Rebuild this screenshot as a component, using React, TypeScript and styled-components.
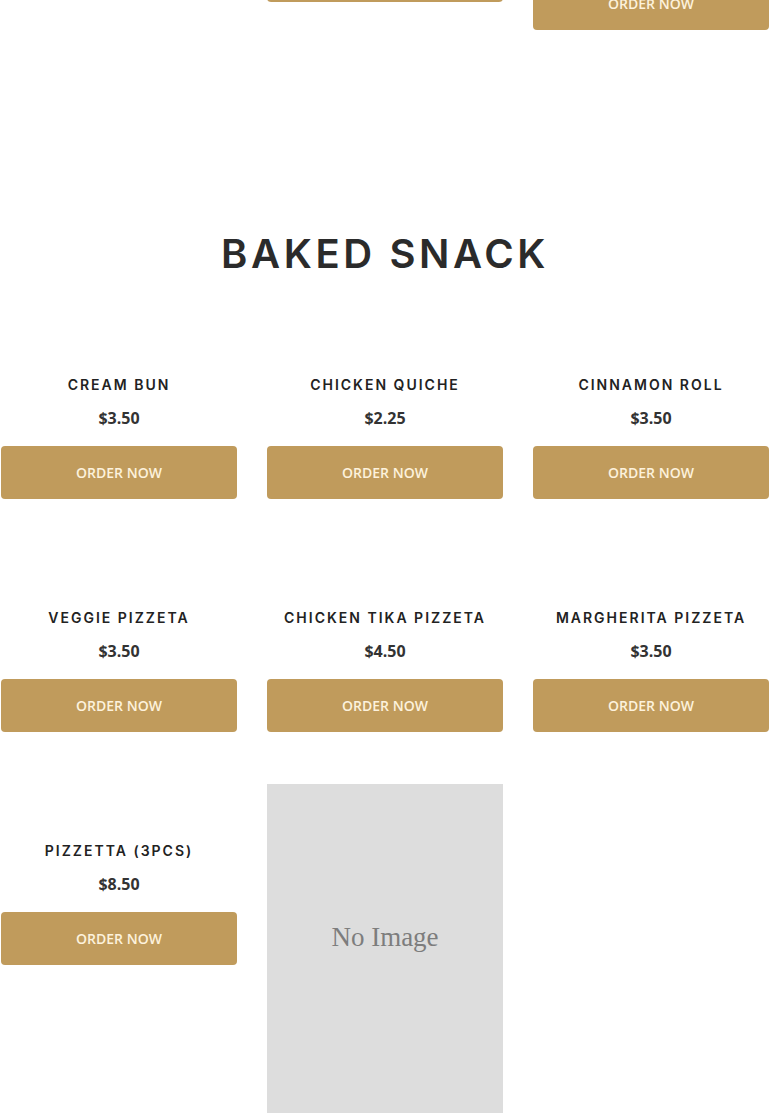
import React from "react";
import styled, { createGlobalStyle } from "styled-components";

const Global = createGlobalStyle`
  html, body { margin: 0; padding: 0; background: #fff; }
  body { font-family: "Open Sans", "Liberation Sans", sans-serif; overflow: hidden; }
`;

const Page = styled.div`
  width: 770px;
  height: 1119px;
  overflow: hidden;
  box-sizing: border-box;
  padding: 0 1px;
`;

const Grid = styled.div<{ $top?: number }>`
  display: grid;
  grid-template-columns: repeat(3, 236px);
  column-gap: 30px;
  row-gap: 49px;
  align-items: start;
  margin-top: ${(p) => p.$top ?? 0}px;
`;

const Heading = styled.h2`
  margin: 200px 0 0;
  height: 48px;
  line-height: 48px;
  text-align: center;
  font-family: Inter, "Noto Sans", sans-serif;
  font-weight: 600;
  font-size: 40px;
  letter-spacing: 3.6px;
  color: #2b2b2b;
`;

const Card = styled.div<{ $pad?: number }>`
  display: flex;
  flex-direction: column;
  align-items: center;
  padding-top: ${(p) => p.$pad ?? 60}px;
`;

const Title = styled.div`
  height: 20px;
  line-height: 20px;
  font-family: Inter, "Noto Sans", sans-serif;
  font-weight: 600;
  font-size: 14px;
  letter-spacing: 2px;
  color: #222;
  text-transform: uppercase;
  white-space: nowrap;
`;

const Price = styled.div`
  margin-top: 11px;
  height: 24px;
  line-height: 24px;
  font-family: "Open Sans", sans-serif;
  font-weight: 700;
  font-size: 16px;
  color: #333;
`;

const Button = styled.button<{ $gap?: number }>`
  margin-top: ${(p) => p.$gap ?? 16}px;
  width: 236px;
  height: 53px;
  border: none;
  border-radius: 4px;
  background: #c09b5c;
  color: #fdf2dc;
  font-family: "Open Sans", sans-serif;
  font-size: 14px;
  font-weight: 600;
  text-transform: uppercase;
  cursor: pointer;
  padding: 0;
`;

const Placeholder = styled.div`
  width: 236px;
  height: 329px;
  box-sizing: border-box;
  padding-bottom: 22px;
  background: #dddddd;
  display: flex;
  align-items: center;
  justify-content: center;
  font-family: "Liberation Serif", "DejaVu Serif", serif;
  font-size: 27px;
  font-weight: 500;
  color: #7d7d7d;
`;

const Empty = styled.div``;

const items = [
  { name: "Cream Bun", price: "$3.50" },
  { name: "Chicken Quiche", price: "$2.25" },
  { name: "Cinnamon Roll", price: "$3.50" },
  { name: "Veggie Pizzeta", price: "$3.50" },
  { name: "Chicken Tika Pizzeta", price: "$4.50" },
  { name: "Margherita Pizzeta", price: "$3.50" },
  { name: "Pizzetta (3pcs)", price: "$8.50" },
];

export default function App() {
  return (
    <Page>
      <Global />
      <Grid $top={-51}>
        <Empty />
        <Button $gap={0}>Order Now</Button>
        <Button $gap={28}>Order Now</Button>
      </Grid>
      <Heading>BAKED SNACK</Heading>
      <Grid $top={37}>
        {items.map((it) => (
          <Card key={it.name}>
            <Title>{it.name}</Title>
            <Price>{it.price}</Price>
            <Button>Order Now</Button>
          </Card>
        ))}
        <Card $pad={3}>
          <Placeholder>No Image</Placeholder>
        </Card>
      </Grid>
    </Page>
  );
}
